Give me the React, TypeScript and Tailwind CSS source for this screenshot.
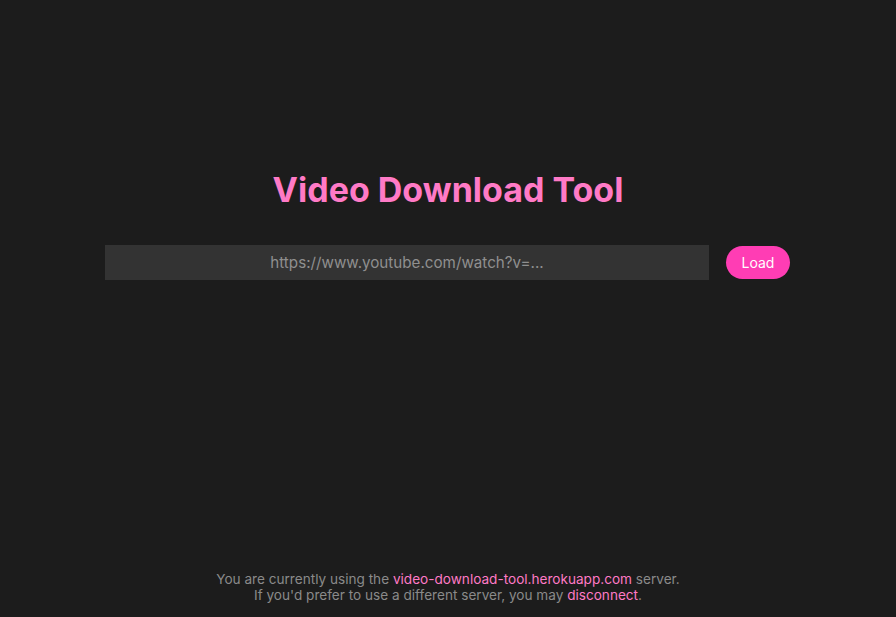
import React from 'react';

const App = () => {
  return (
    <div
      className="flex min-h-screen flex-col bg-[#1c1c1c] text-white"
      style={{ fontFamily: 'Inter, "Noto Sans", sans-serif' }}
    >
      <main className="flex flex-1 flex-col items-center pt-[170px]">
        <h1 className="text-[34px] font-bold leading-[40px] text-[#ff7ac6]">
          Video Download Tool
        </h1>
        <div className="mt-[35px] flex w-full items-center gap-[17px] pl-[105px] pr-[106px]">
          <input
            type="text"
            placeholder="https://www.youtube.com/watch?v=..."
            className="h-[35px] flex-1 bg-[#333333] text-center text-[15.2px] text-white outline-none placeholder:text-[#8f8f8f]"
          />
          <button className="h-[33px] w-[64px] rounded-full bg-[#ff3db4] text-[14px] text-white">
            Load
          </button>
        </div>
      </main>
      <footer className="pb-[14px] text-center text-[13.6px] leading-[16px] text-[#8a8a8a]">
        <p>
          You are currently using the{' '}
          <a className="text-[#ff7ac6]">video-download-tool.herokuapp.com</a> server.
        </p>
        <p>
          If you'd prefer to use a different server, you may{' '}
          <a className="text-[#ff7ac6]">disconnect</a>.
        </p>
      </footer>
    </div>
  );
};

export default App;
